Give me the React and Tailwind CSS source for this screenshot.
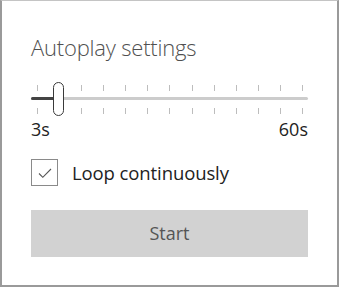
import { useState } from 'react'

const TICKS = Array.from({ length: 13 }, (_, i) => i)

export default function App() {
  const [loop, setLoop] = useState(true)
  const value = 3

  return (
    <div className="w-[339px] h-[288px] bg-white" style={{ fontFamily: '"Open Sans", "Noto Sans", sans-serif' }}>
      <div className="w-[339px] h-[287px] border border-[#c4c4c4] border-l-2 border-l-[#9a9a9a] border-r-2 border-r-[#9a9a9a] border-b-2 border-b-[#9a9a9a] px-[29px] pt-[30px]">
        <h2 className="text-[22px] leading-[32px] font-light text-[#505050] tracking-[-0.2px]">Autoplay settings</h2>

        {/* Slider */}
        <div className="relative mt-[19px] h-[34px]">
          <div className="absolute left-[6px] right-[5px] top-[3px] flex justify-between">
            {TICKS.map(t => (
              <span key={t} className="w-px h-[6px] bg-[#bdbdbd]" />
            ))}
          </div>
          <div className="absolute left-0 right-0 top-[15px] h-[3px] rounded-full bg-[#cccccc]" />
          <div className="absolute left-0 w-[24px] top-[15px] h-[3px] rounded-l-full bg-[#444]" />
          <div className="absolute left-[6px] right-[5px] bottom-[2px] flex justify-between">
            {TICKS.map(t => (
              <span key={t} className="w-px h-[6px] bg-[#bdbdbd]" />
            ))}
          </div>
          <div
            className="absolute top-0 left-[22px] w-[11px] h-[34px] rounded-full bg-white border border-[#3a3a3a]"
            aria-valuenow={value}
          />
        </div>
        <div className="flex justify-between text-[18px] leading-[22px] text-[#222] mt-[2px]">
          <span>3s</span>
          <span>60s</span>
        </div>

        {/* Checkbox */}
        <label className="flex items-center mt-[19px] cursor-pointer" onClick={() => setLoop(!loop)}>
          <span className="w-[27px] h-[27px] border border-[#8a8a8a] flex items-center justify-center">
            {loop && (
              <svg width="16" height="16" viewBox="0 0 16 16" fill="none" stroke="#555" strokeWidth="1.1">
                <path d="M2 8.5l3.8 3.8L14 4" />
              </svg>
            )}
          </span>
          <span className="ml-[14px] text-[18.5px] leading-[24px] text-[#222] tracking-[-0.1px]">Loop continuously</span>
        </label>

        {/* Button */}
        <button className="mt-[24px] w-full h-[47px] bg-[#d2d2d2] text-[18px] text-[#555]">Start</button>
      </div>
    </div>
  )
}
